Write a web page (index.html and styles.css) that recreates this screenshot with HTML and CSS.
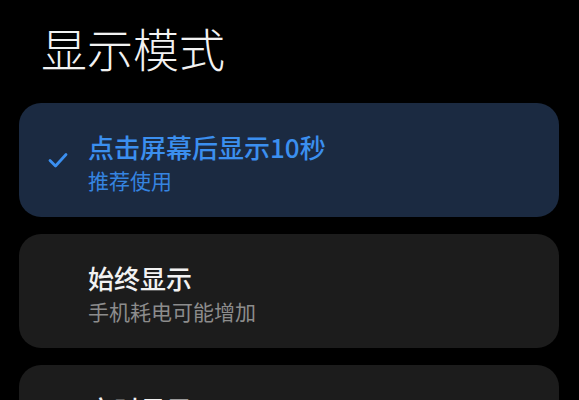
FILE: index.html
```html
<!DOCTYPE html>
<html lang="zh-CN">
<head>
<meta charset="utf-8">
<title>显示模式</title>
<link rel="stylesheet" href="styles.css">
</head>
<body>
<div class="page">
  <h1 class="page-title">显示模式</h1>
  <div class="options">
    <div class="option option-selected">
      <div class="option-icon">
        <svg viewBox="0 0 20 16" width="20" height="16"><path d="M2 8.5 L7.5 14 L18 2.5" fill="none" stroke="#3b8ff0" stroke-width="2.8" stroke-linecap="round" stroke-linejoin="round"/></svg>
      </div>
      <div class="option-text">
        <div class="option-title">点击屏幕后显示10秒</div>
        <div class="option-sub">推荐使用</div>
      </div>
    </div>
    <div class="option">
      <div class="option-icon"></div>
      <div class="option-text">
        <div class="option-title">始终显示</div>
        <div class="option-sub">手机耗电可能增加</div>
      </div>
    </div>
    <div class="option">
      <div class="option-icon"></div>
      <div class="option-text">
        <div class="option-title">定时显示</div>
      </div>
    </div>
  </div>
</div>
</body>
</html>
```

FILE: styles.css
```css
html, body {
  margin: 0;
  padding: 0;
  background: #000;
}
body {
  font-family: "Noto Sans CJK SC", "Noto Sans", sans-serif;
  width: 579px;
  height: 400px;
  overflow: hidden;
}
.page {
  padding: 19px 20px 0 19px;
}
.page-title {
  margin: 0 0 28px 22px;
  font-size: 46px;
  line-height: 56px;
  font-weight: 300;
  color: #f2f2f2;
}
.options {
  display: flex;
  flex-direction: column;
  gap: 17px;
}
.option {
  display: flex;
  align-items: flex-start;
  gap: 20px;
  height: 114px;
  box-sizing: border-box;
  padding: 28px 0 0 29px;
  border-radius: 22px;
  background: #1c1c1c;
}
.option-selected {
  background: #1b2a41;
}
.option-icon {
  width: 20px;
  height: 16px;
  margin-top: 21px;
  flex: none;
}
.option-icon svg {
  display: block;
}
.option-text {
  display: flex;
  flex-direction: column;
  gap: 3px;
}
.option-title {
  font-size: 26px;
  line-height: 32px;
  font-weight: 500;
  color: #f2f2f2;
}
.option-sub {
  font-size: 21px;
  line-height: 28px;
  color: #8c8c8c;
}
.option-selected .option-title {
  color: #3b8fef;
}
.option-selected .option-sub {
  color: #3584e0;
}
```
